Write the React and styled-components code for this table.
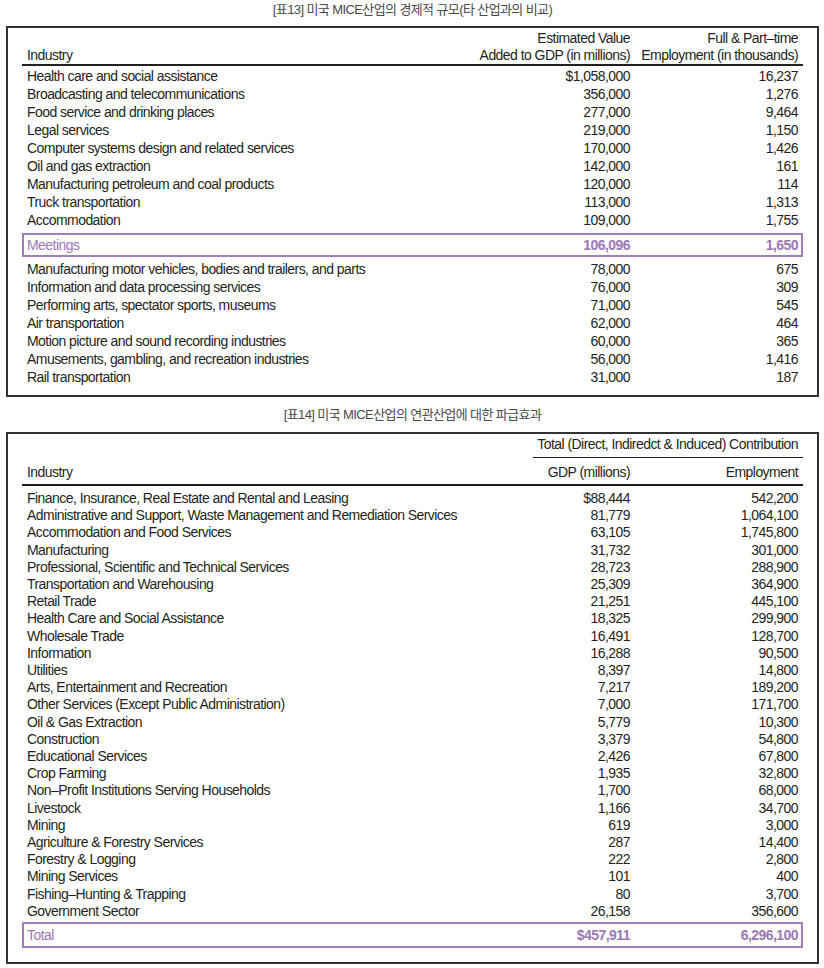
import React from 'react'
import styled, { createGlobalStyle } from 'styled-components'

const GlobalStyle = createGlobalStyle`
  body {
    margin: 0;
    background: #ffffff;
    font-family: "Liberation Sans", Arial, sans-serif;
    color: #231f20;
  }
`;

const Page = styled.div`
  width: 824px;
  padding: 0 5px 0 6px;
  box-sizing: border-box;
`;

const Caption = styled.div`
  text-align: center;
  font-family: "Liberation Sans", "Noto Sans CJK KR", sans-serif;
  font-size: 13px;
  letter-spacing: -0.6px;
  line-height: 20px;
  color: #4a4a4a;
  margin: ${p => p.$top}px 0 ${p => p.$bottom}px;
`;

const Panel = styled.div`
  border: 2px solid #333;
  padding: 2px 14px ${p => p.$bottom}px;
`;

const Grid = styled.div`
  display: grid;
  grid-template-columns: minmax(0, 1fr) 170px 168px;
  padding: 0 5px;
  font-size: 14px;
  letter-spacing: -0.55px;
  line-height: ${p => p.$lh}px;
`;

const HeadGrid = styled(Grid)`
  border-bottom: 2px solid #231f20;
  align-items: end;
  padding-bottom: ${p => p.$pb || 0}px;
`;

const Cell = styled.div`
  text-align: ${p => (p.$left ? 'left' : 'right')};
  font-weight: ${p => (p.$bold ? 700 : 400)};
  white-space: nowrap;
`;

const GroupHead = styled.div`
  display: flex;
  justify-content: flex-end;
`;

const GroupLabel = styled.div`
  width: 270px;
  text-align: right;
  font-size: 14px;
  letter-spacing: -0.55px;
  line-height: 17px;
  padding: 0 5px 4px 0;
  box-sizing: border-box;
  border-bottom: 1px solid #231f20;
  margin-bottom: 6px;
  white-space: nowrap;
`;

const Body = styled.div`
  padding-top: ${p => p.$top}px;
`;

const Highlight = styled(Grid)`
  border: 2px solid #a07dbb;
  color: #9b78b5;
  margin: ${p => p.$margin};
  padding: 0 3px;
`;

const table13 = [
  ['Health care and social assistance', '$1,058,000', '16,237'],
  ['Broadcasting and telecommunications', '356,000', '1,276'],
  ['Food service and drinking places', '277,000', '9,464'],
  ['Legal services', '219,000', '1,150'],
  ['Computer systems design and related services', '170,000', '1,426'],
  ['Oil and gas extraction', '142,000', '161'],
  ['Manufacturing petroleum and coal products', '120,000', '114'],
  ['Truck transportation', '113,000', '1,313'],
  ['Accommodation', '109,000', '1,755'],
];

const table13b = [
  ['Manufacturing motor vehicles, bodies and trailers, and parts', '78,000', '675'],
  ['Information and data processing services', '76,000', '309'],
  ['Performing arts, spectator sports, museums', '71,000', '545'],
  ['Air transportation', '62,000', '464'],
  ['Motion picture and sound recording industries', '60,000', '365'],
  ['Amusements, gambling, and recreation industries', '56,000', '1,416'],
  ['Rail transportation', '31,000', '187'],
];

const table14 = [
  ['Finance, Insurance, Real Estate and Rental and Leasing', '$88,444', '542,200'],
  ['Administrative and Support, Waste Management and Remediation Services', '81,779', '1,064,100'],
  ['Accommodation and Food Services', '63,105', '1,745,800'],
  ['Manufacturing', '31,732', '301,000'],
  ['Professional, Scientific and Technical Services', '28,723', '288,900'],
  ['Transportation and Warehousing', '25,309', '364,900'],
  ['Retail Trade', '21,251', '445,100'],
  ['Health Care and Social Assistance', '18,325', '299,900'],
  ['Wholesale Trade', '16,491', '128,700'],
  ['Information', '16,288', '90,500'],
  ['Utilities', '8,397', '14,800'],
  ['Arts, Entertainment and Recreation', '7,217', '189,200'],
  ['Other Services (Except Public Administration)', '7,000', '171,700'],
  ['Oil & Gas Extraction', '5,779', '10,300'],
  ['Construction', '3,379', '54,800'],
  ['Educational Services', '2,426', '67,800'],
  ['Crop Farming', '1,935', '32,800'],
  ['Non–Profit Institutions Serving Households', '1,700', '68,000'],
  ['Livestock', '1,166', '34,700'],
  ['Mining', '619', '3,000'],
  ['Agriculture & Forestry Services', '287', '14,400'],
  ['Forestry & Logging', '222', '2,800'],
  ['Mining Services', '101', '400'],
  ['Fishing–Hunting & Trapping', '80', '3,700'],
  ['Government Sector', '26,158', '356,600'],
];

const Rows = ({ rows, lh }) => (
  <Grid $lh={lh}>
    {rows.map(r => (
      <React.Fragment key={r[0]}>
        <Cell $left>{r[0]}</Cell>
        <Cell>{r[1]}</Cell>
        <Cell>{r[2]}</Cell>
      </React.Fragment>
    ))}
  </Grid>
);

const App = () => {
  return (
    <Page>
      <GlobalStyle />
      <Caption $top={0} $bottom={6}>[표13] 미국 MICE산업의 경제적 규모(타 산업과의 비교)</Caption>
      <Panel $bottom={9}>
        <HeadGrid $lh={17}>
          <Cell $left>Industry</Cell>
          <Cell>Estimated Value<br />Added to GDP (in millions)</Cell>
          <Cell>Full &amp; Part–time<br />Employment (in thousands)</Cell>
        </HeadGrid>
        <Body $top={1}>
          <Rows rows={table13} lh={18} />
          <Highlight $lh={20} $margin="4px 0 3px">
            <Cell $left>Meetings</Cell>
            <Cell $bold>106,096</Cell>
            <Cell $bold>1,650</Cell>
          </Highlight>
          <Rows rows={table13b} lh={18} />
        </Body>
      </Panel>
      <Caption $top={8} $bottom={7}>[표14] 미국 MICE산업의 연관산업에 대한 파급효과</Caption>
      <Panel $bottom={14}>
        <GroupHead>
          <GroupLabel>Total (Direct, Indiredct &amp; Induced) Contribution</GroupLabel>
        </GroupHead>
        <HeadGrid $lh={17} $pb={3}>
          <Cell $left>Industry</Cell>
          <Cell>GDP (millions)</Cell>
          <Cell>Employment</Cell>
        </HeadGrid>
        <Body $top={4}>
          <Rows rows={table14} lh={17.2} />
          <Highlight $lh={22} $margin="2px 0 0">
            <Cell $left>Total</Cell>
            <Cell $bold>$457,911</Cell>
            <Cell $bold>6,296,100</Cell>
          </Highlight>
        </Body>
      </Panel>
    </Page>
  );
};

export default App;
